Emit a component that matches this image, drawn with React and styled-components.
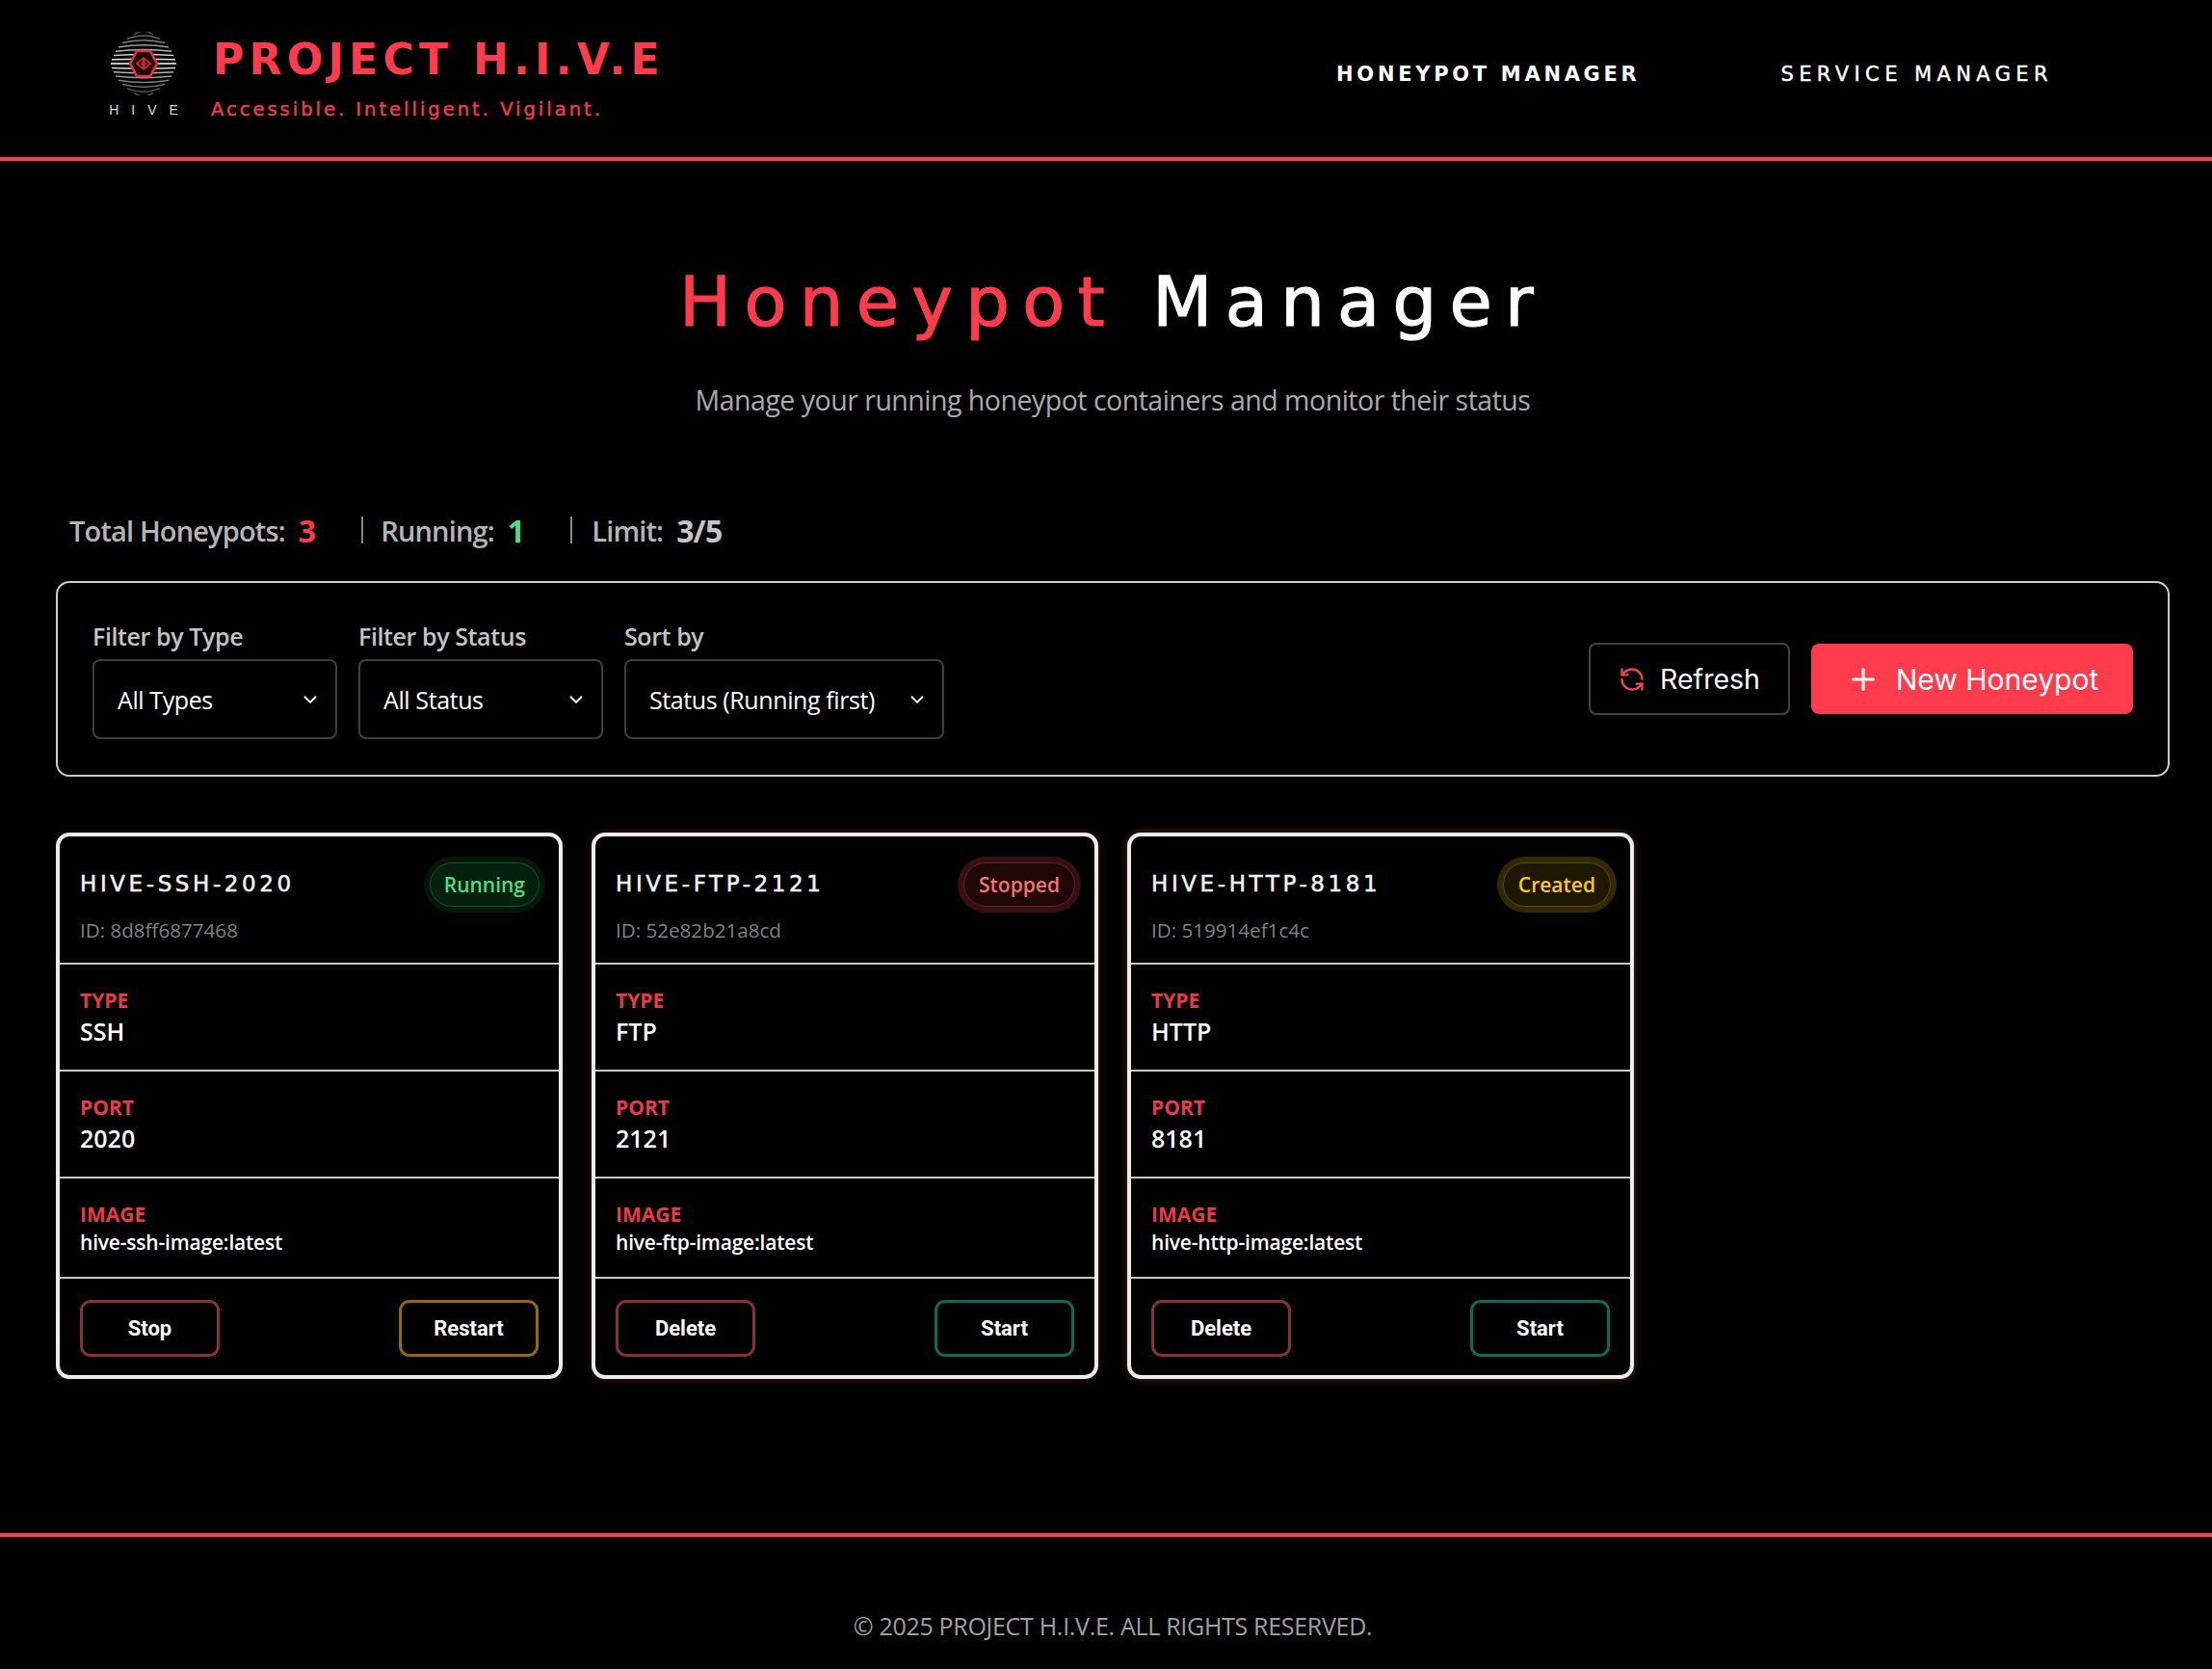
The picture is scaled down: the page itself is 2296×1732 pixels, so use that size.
import React from "react";
import styled, { createGlobalStyle } from "styled-components";
import { Plus, RefreshCcw } from "lucide-react";

const RED = "#ff3b4e";
const TECH = '"DejaVu Sans", sans-serif';
const BODY = '"Open Sans", "Noto Sans", sans-serif';

const chevron =
  "url(\"data:image/svg+xml;utf8,<svg xmlns='http://www.w3.org/2000/svg' width='22' height='22' viewBox='0 0 24 24' fill='none' stroke='white' stroke-width='2' stroke-linecap='round' stroke-linejoin='round'><path d='m6 9 6 6 6-6'/></svg>\")";

const GlobalStyle = createGlobalStyle`
  * { box-sizing: border-box; }
  html, body { margin: 0; background: #000; }
  body { font-family: ${BODY}; color: #fff; }
`;

const Page = styled.div`
  width: 2296px;
  min-height: 1732px;
  display: flex;
  flex-direction: column;
  background: #000;
`;

const Header = styled.header`
  height: 167px;
  border-bottom: 4px solid ${RED};
  display: flex;
  align-items: flex-start;
  justify-content: space-between;
  padding: 33px 165px 0 110px;
`;

const Brand = styled.div`
  display: flex;
  gap: 33px;
`;

const LogoWrap = styled.div`
  width: 78px;
  display: flex;
  flex-direction: column;
  align-items: center;
`;

const LogoText = styled.span`
  font-family: "Liberation Sans", sans-serif;
  font-size: 14px;
  line-height: 18px;
  letter-spacing: 13px;
  margin-right: -13px;
  margin-top: 6px;
  color: #ddd;
`;

const BrandText = styled.div`
  display: flex;
  flex-direction: column;
`;

const BrandTitle = styled.div`
  font-family: ${TECH};
  font-weight: 700;
  font-size: 44px;
  line-height: 58px;
  letter-spacing: 5.3px;
  color: ${RED};
  white-space: nowrap;
`;

const Tagline = styled.div`
  font-family: ${TECH};
  font-weight: 400;
  font-size: 19.5px;
  line-height: 24px;
  letter-spacing: 3px;
  margin-top: 11px;
  margin-left: -2px;
  color: #ee3c4d;
  -webkit-text-stroke: 0.5px #ee3c4d;
  white-space: nowrap;
`;

const Nav = styled.nav`
  display: flex;
  gap: 146px;
  padding-top: 26px;
`;

const NavLink = styled.a`
  font-family: ${TECH};
  font-size: 21px;
  line-height: 36px;
  letter-spacing: ${(p) => (p.$active ? 3.7 : 5.4)}px;
  font-weight: ${(p) => (p.$active ? 700 : 400)};
  -webkit-text-stroke: ${(p) => (p.$active ? 0 : 0.4)}px #fff;
  color: #fff;
  white-space: nowrap;
`;

const Main = styled.main`
  flex: 1;
  padding: 0 44px 0 58px;
`;

const Hero = styled.section`
  display: flex;
  flex-direction: column;
  align-items: center;
  padding-top: 98px;
`;

const PageTitle = styled.h1`
  margin: 0;
  font-family: ${TECH};
  font-weight: 400;
  font-size: 72px;
  line-height: 96px;
  letter-spacing: 13.3px;
  -webkit-text-stroke: 1.2px currentColor;
  color: #fff;
  white-space: nowrap;
`;

const Accent = styled.span`
  color: ${RED};
`;

const Subtitle = styled.p`
  margin: 34px 0 0;
  font-size: 28.5px;
  line-height: 40px;
  letter-spacing: -0.5px;
  color: #aaa;
`;

const Stats = styled.div`
  display: flex;
  align-items: center;
  height: 44px;
  margin-top: 93px;
  padding-left: 14px;
  font-size: 29px;
  letter-spacing: -0.85px;
  font-weight: 600;
  color: #b5b5b5;
  white-space: nowrap;
`;

const StatValue = styled.span`
  margin-left: 14px;
  font-size: 32px;
  font-weight: 700;
  color: ${(p) => p.$color};
  margin-right: ${(p) => p.$gap}px;
`;

const StatDivider = styled.span`
  width: 2px;
  height: 28px;
  margin-right: ${(p) => p.$after}px;
  background: #888;
`;

const FilterPanel = styled.section`
  margin-top: 31px;
  height: 203px;
  border: 2px solid #ccc;
  border-radius: 14px;
  display: flex;
  align-items: center;
  justify-content: space-between;
  padding: 0 36px;
`;

const Filters = styled.div`
  display: flex;
  gap: 22px;
`;

const Field = styled.label`
  display: flex;
  flex-direction: column;
  gap: 6px;
`;

const FieldLabel = styled.span`
  font-size: 25px;
  line-height: 36px;
  letter-spacing: -0.4px;
  font-weight: 600;
  color: #c4c4c4;
`;

const Select = styled.select`
  appearance: none;
  width: ${(p) => p.$width}px;
  height: 83px;
  padding: 0 24px;
  border: 2px solid #3e3e3e;
  border-radius: 8px;
  background: #000 ${chevron} no-repeat right 15px center;
  color: #fff;
  font-family: ${BODY};
  font-size: 25px;
  letter-spacing: -0.4px;
`;

const Actions = styled.div`
  display: flex;
  align-items: center;
  gap: 22px;
`;

const ActionButton = styled.button`
  display: flex;
  align-items: center;
  justify-content: center;
  font-family: Inter, sans-serif;
  color: #fff;
  border-radius: 8px;
  cursor: pointer;
`;

const RefreshButton = styled(ActionButton)`
  width: 209px;
  height: 75px;
  gap: 15px;
  font-size: 28.5px;
  background: #000;
  border: 2px solid #444;
  svg { color: #e8484f; }
`;

const NewButton = styled(ActionButton)`
  width: 334px;
  height: 73px;
  gap: 16px;
  font-size: 30px;
  background: ${RED};
  border: none;
`;

const CardGrid = styled.div`
  display: flex;
  gap: 30px;
  margin-top: 58px;
`;

const Card = styled.article`
  width: 526px;
  height: 567px;
  border: 4px solid #ececec;
  border-radius: 14px;
  box-shadow: 0 0 8px ${(p) => p.$glow};
  display: flex;
  flex-direction: column;
  overflow: hidden;
`;

const CardHead = styled.div`
  height: 133px;
  border-bottom: 2px solid #c8c8c8;
  padding: 27px 20px 0 21px;
  display: flex;
  justify-content: space-between;
  align-items: flex-start;
`;

const HeadText = styled.div`
  display: flex;
  flex-direction: column;
`;

const CardName = styled.div`
  font-family: ${TECH};
  font-size: 23px;
  line-height: 44px;
  letter-spacing: 3.6px;
  -webkit-text-stroke: 0.5px #f4f4f4;
  color: #f4f4f4;
  white-space: nowrap;
`;

const CardId = styled.div`
  margin-top: 12px;
  font-size: 20.6px;
  line-height: 28px;
  color: #808080;
`;

const Badge = styled.span`
  height: 46px;
  padding: 0 ${(p) => p.$pad}px;
  border-radius: 23px;
  display: flex;
  align-items: center;
  font-size: 21px;
  font-weight: 600;
  color: ${(p) => p.$color};
  background: ${(p) => p.$bg};
  border: 1.5px solid ${(p) => p.$border};
  box-shadow: 0 0 0 6px ${(p) => p.$ring};
`;

const InfoRow = styled.div`
  height: ${(p) => p.$height}px;
  border-bottom: 2px solid #c8c8c8;
  padding: 24px 21px 0;
  display: flex;
  flex-direction: column;
`;

const InfoLabel = styled.span`
  font-size: 21px;
  line-height: 26px;
  font-weight: 700;
  color: #e93a4b;
`;

const InfoValue = styled.span`
  margin-top: ${(p) => (p.$small ? 2 : 3)}px;
  font-size: ${(p) => (p.$small ? 21 : 25)}px;
  line-height: ${(p) => (p.$small ? 28 : 32)}px;
  letter-spacing: ${(p) => (p.$small ? -0.2 : 0)}px;
  font-weight: 600;
  color: #fff;
`;

const CardActions = styled.div`
  flex: 1;
  padding: 22px 21px 0;
  display: flex;
  justify-content: space-between;
  align-items: flex-start;
`;

const CardButton = styled.button`
  width: 145px;
  height: 59px;
  background: #000;
  border: 3px solid ${(p) => p.$color};
  border-radius: 11px;
  color: #fff;
  font-family: Roboto, sans-serif;
  font-weight: 700;
  font-size: 22px;
  cursor: pointer;
`;

const Footer = styled.footer`
  height: 141px;
  border-top: 4px solid ${RED};
  display: flex;
  justify-content: center;
  padding: 75px 0 0 14px;
  font-size: 25px;
  line-height: 34px;
  letter-spacing: -0.3px;
  color: #a0a0a0;
`;

const BTN = { stop: "#8a3135", restart: "#946616", start: "#0e6a52" };

const STATUS = {
  Running: { color: "#4ade80", bg: "#04200f", border: "#14532d", ring: "#03180b", pad: 14 },
  Stopped: { color: "#f87171", bg: "#200708", border: "#6b2226", ring: "#350f11", pad: 15 },
  Created: { color: "#facc15", bg: "#1e1702", border: "#5e4a0a", ring: "#332805", pad: 15 },
};

const honeypots = [
  {
    name: "HIVE-SSH-2020", id: "8d8ff6877468", status: "Running", type: "SSH", port: "2020",
    image: "hive-ssh-image:latest", glow: "rgba(60,200,120,0.12)",
    left: ["Stop", BTN.stop], right: ["Restart", BTN.restart],
  },
  {
    name: "HIVE-FTP-2121", id: "52e82b21a8cd", status: "Stopped", type: "FTP", port: "2121",
    image: "hive-ftp-image:latest", glow: "rgba(255,60,80,0.3)",
    left: ["Delete", BTN.stop], right: ["Start", BTN.start],
  },
  {
    name: "HIVE-HTTP-8181", id: "519914ef1c4c", status: "Created", type: "HTTP", port: "8181",
    image: "hive-http-image:latest", glow: "rgba(255,170,90,0.3)",
    left: ["Delete", BTN.stop], right: ["Start", BTN.start],
  },
];

// stripes of the hive, top to bottom: half width, brightness
const stripes = [
  [10, 0.3], [17, 0.4], [22, 0.5], [26, 0.6], [29, 0.7], [31, 0.8], [33, 0.9], [34, 1],
  [33, 0.85], [31, 0.7], [29, 0.6], [26, 0.5], [22, 0.45], [17, 0.35], [10, 0.3],
];

function HiveLogo() {
  return (
    <svg width="78" height="66" viewBox="0 0 78 66" fill="none">
      {stripes.map(([w, o], i) => {
        const y = 3 + i * 4.3;
        const bow = (i - 7) * 0.55;
        return (
          <path
            key={i}
            d={`M${39 - w} ${y}Q39 ${y + bow * 2} ${39 + w} ${y}`}
            stroke="#fff"
            strokeOpacity={o}
            strokeWidth="1.5"
          />
        );
      })}
      <path d="M25 33 32 20H46L53 33 46 46H32Z" fill="#170204" stroke="#e8303f" strokeWidth="2.6" />
      <path d="M30.5 33 39 26 47.5 33 39 40Z" fill="#d4232f" />
      <path d="M37.5 30 35 33 37.5 36M40.5 30 43 33 40.5 36" stroke="#000" strokeWidth="1.5" />
    </svg>
  );
}

function HoneypotCard({ pot }) {
  const s = STATUS[pot.status];
  return (
    <Card $glow={pot.glow}>
      <CardHead>
        <HeadText>
          <CardName>{pot.name}</CardName>
          <CardId>ID: {pot.id}</CardId>
        </HeadText>
        <Badge $color={s.color} $bg={s.bg} $border={s.border} $ring={s.ring} $pad={s.pad}>
          {pot.status}
        </Badge>
      </CardHead>
      <InfoRow $height={111}>
        <InfoLabel>TYPE</InfoLabel>
        <InfoValue>{pot.type}</InfoValue>
      </InfoRow>
      <InfoRow $height={111}>
        <InfoLabel>PORT</InfoLabel>
        <InfoValue>{pot.port}</InfoValue>
      </InfoRow>
      <InfoRow $height={104}>
        <InfoLabel>IMAGE</InfoLabel>
        <InfoValue $small>{pot.image}</InfoValue>
      </InfoRow>
      <CardActions>
        <CardButton $color={pot.left[1]}>{pot.left[0]}</CardButton>
        <CardButton $color={pot.right[1]}>{pot.right[0]}</CardButton>
      </CardActions>
    </Card>
  );
}

export default function App() {
  return (
    <Page>
      <GlobalStyle />
      <Header>
        <Brand>
          <LogoWrap>
            <HiveLogo />
            <LogoText>HIVE</LogoText>
          </LogoWrap>
          <BrandText>
            <BrandTitle>PROJECT H.I.V.E</BrandTitle>
            <Tagline>Accessible. Intelligent. Vigilant.</Tagline>
          </BrandText>
        </Brand>
        <Nav>
          <NavLink $active>HONEYPOT MANAGER</NavLink>
          <NavLink>SERVICE MANAGER</NavLink>
        </Nav>
      </Header>

      <Main>
        <Hero>
          <PageTitle>
            <Accent>Honeypot</Accent> Manager
          </PageTitle>
          <Subtitle>Manage your running honeypot containers and monitor their status</Subtitle>
        </Hero>

        <Stats>
          Total Honeypots:
          <StatValue $color={RED} $gap={48}>3</StatValue>
          <StatDivider $after={18} />
          Running:
          <StatValue $color="#4ade80" $gap={48}>1</StatValue>
          <StatDivider $after={20} />
          Limit:
          <StatValue $color="#c4c4c4" $gap={0}>3/5</StatValue>
        </Stats>

        <FilterPanel>
          <Filters>
            <Field>
              <FieldLabel>Filter by Type</FieldLabel>
              <Select $width={254} defaultValue="all">
                <option value="all">All Types</option>
              </Select>
            </Field>
            <Field>
              <FieldLabel>Filter by Status</FieldLabel>
              <Select $width={254} defaultValue="all">
                <option value="all">All Status</option>
              </Select>
            </Field>
            <Field>
              <FieldLabel>Sort by</FieldLabel>
              <Select $width={332} defaultValue="status">
                <option value="status">Status (Running first)</option>
              </Select>
            </Field>
          </Filters>
          <Actions>
            <RefreshButton>
              <RefreshCcw size={28} />
              Refresh
            </RefreshButton>
            <NewButton>
              <Plus size={36} />
              New Honeypot
            </NewButton>
          </Actions>
        </FilterPanel>

        <CardGrid>
          {honeypots.map((pot) => (
            <HoneypotCard key={pot.id} pot={pot} />
          ))}
        </CardGrid>
      </Main>

      <Footer>© 2025 PROJECT H.I.V.E. ALL RIGHTS RESERVED.</Footer>
    </Page>
  );
}
